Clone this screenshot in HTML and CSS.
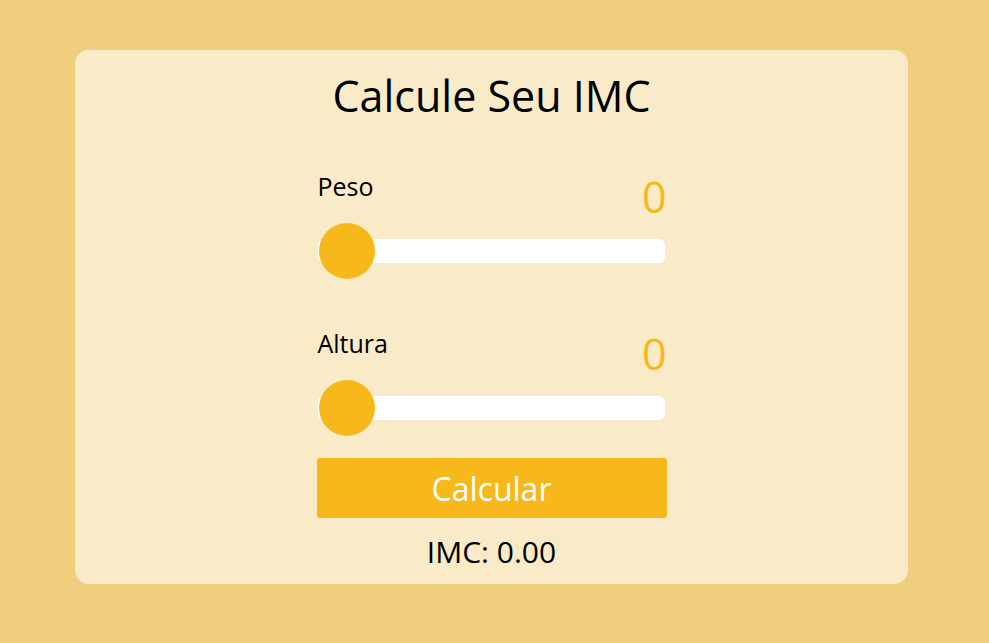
FILE: index.html
```html
<!DOCTYPE html>
<html lang="pt">
<head>
<meta charset="utf-8">
<title>Calcule Seu IMC</title>
<link rel="stylesheet" href="styles.css">
</head>
<body>
<main class="card">
  <h1 class="title">Calcule Seu IMC</h1>
  <div class="form">
    <div class="group">
      <div class="group-head">
        <span class="label">Peso</span>
        <span class="value">0</span>
      </div>
      <div class="slider"><span class="thumb"></span></div>
    </div>
    <div class="group group-second">
      <div class="group-head">
        <span class="label">Altura</span>
        <span class="value">0</span>
      </div>
      <div class="slider"><span class="thumb"></span></div>
    </div>
    <button class="btn" type="button">Calcular</button>
    <p class="result">IMC: 0.00</p>
  </div>
</main>
</body>
</html>
```
FILE: styles.css
```css
* { box-sizing: border-box; }
html, body { margin: 0; padding: 0; }
body {
  background: #efcf7e;
  font-family: "Open Sans", "Noto Sans", sans-serif;
  color: #000;
  height: 643px;
  padding-top: 50px;
  padding-left: 75px;
}
.card {
  width: 833px;
  height: 534px;
  background: #f9eac8;
  border-radius: 14px;
  padding-top: 22px;
  display: flex;
  flex-direction: column;
  align-items: center;
}
.title {
  margin: 0;
  font-size: 43px;
  font-weight: 400;
  line-height: 48px;
}
.form {
  width: 350px;
  margin-top: 51px;
  display: flex;
  flex-direction: column;
}
.group-head {
  display: flex;
  justify-content: space-between;
  align-items: flex-start;
  padding: 0 0 0 1px;
  height: 50px;
}
.label {
  font-size: 25px;
  line-height: 30px;
}
.value {
  margin-top: 2px;
  font-size: 43px;
  line-height: 48px;
  color: #f7b81b;
}
.slider {
  position: relative;
  margin: 18px 2px 0 1px;
  height: 24px;
  background: #fff;
  border-radius: 6px;
}
.thumb {
  position: absolute;
  left: 1px;
  top: -16px;
  width: 56px;
  height: 56px;
  border-radius: 50%;
  background: #f7b81b;
}
.group-second { margin-top: 65px; }
.btn {
  margin-top: 38px;
  height: 60px;
  border: 0;
  border-radius: 3px;
  background: #f7b81b;
  color: #fff;
  font-family: inherit;
  font-size: 32px;
  padding: 0;
}
.result {
  margin: 16px 0 0;
  text-align: center;
  font-size: 30px;
  line-height: 36px;
}
```
